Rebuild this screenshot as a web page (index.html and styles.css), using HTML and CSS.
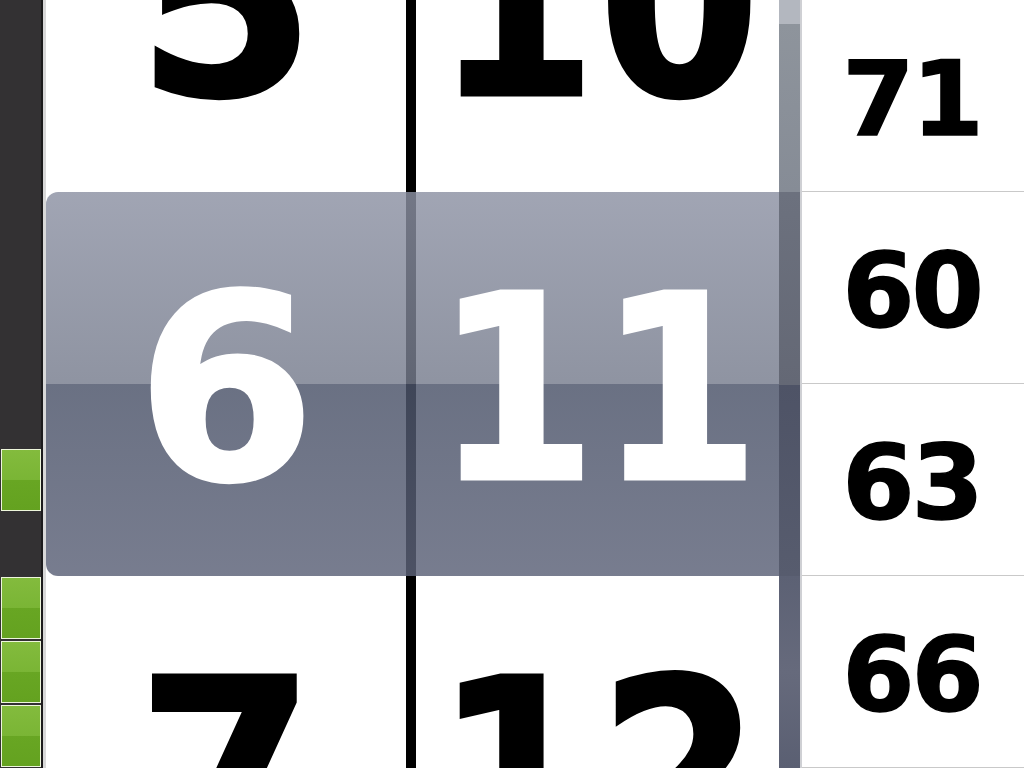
FILE: index.html
```html
<!DOCTYPE html>
<html>
<head>
<meta charset="utf-8">
<link rel="stylesheet" href="styles.css">
</head>
<body>
<div class="app">
  <div class="meter">
    <div class="seg"></div><div class="seg"></div><div class="seg"></div><div class="seg"></div>
    <div class="seg"></div><div class="seg"></div><div class="seg"></div><div class="seg on"></div>
    <div class="seg"></div><div class="seg on"></div><div class="seg on"></div><div class="seg on"></div>
  </div>
  <div class="wheels">
    <div class="col col-a">
      <div class="reel">
        <div class="cell">5</div>
        <div class="cell sel"><span class="num">6</span></div>
        <div class="cell">7</div>
      </div>
    </div>
    <div class="divider"></div>
    <div class="col col-b">
      <div class="reel">
        <div class="cell">10</div>
        <div class="cell sel"><span class="num">11</span></div>
        <div class="cell">12</div>
      </div>
    </div>
    <div class="overlay"></div>
  </div>
  <div class="scrollbar">
    <div class="thumb"></div>
    <div class="track t1"></div>
    <div class="track t2"></div>
    <div class="track t3"></div>
    <div class="track t4"></div>
  </div>
  <div class="list">
    <div class="item">71</div>
    <div class="item">60</div>
    <div class="item">63</div>
    <div class="item">66</div>
  </div>
</div>
</body>
</html>
```
FILE: styles.css
```css
html, body {
  margin: 0;
  padding: 0;
  background: #ffffff;
}
.app {
  display: flex;
  width: 1024px;
  height: 768px;
  overflow: hidden;
  font-family: "DejaVu Sans", "Liberation Sans", sans-serif;
  font-weight: bold;
}
.meter {
  width: 41px;
  flex: none;
  background: #333133;
  border-right: 2px solid #1c1b1c;
  box-shadow: 3px 0 0 #d8d8d8;
  margin-right: 3px;
  display: grid;
  grid-template-rows: repeat(12, 64px);
}
.seg.on {
  margin: 1px 0 1px 1px;
  border: 1px solid #eef6dc;
  background: linear-gradient(to bottom, #83bb3d 0%, #7ab535 50%, #68a623 50%, #64a220 100%);
}
.wheels {
  position: relative;
  display: flex;
  width: 733px;
  flex: none;
  overflow: hidden;
}
.col {
  background: #ffffff;
  overflow: hidden;
}
.col-a { width: 360px; }
.col-b { width: 363px; }
.divider {
  width: 10px;
  background: #000000;
}
.reel {
  margin-top: -192px;
}
.cell {
  height: 384px;
  display: flex;
  align-items: center;
  justify-content: center;
  font-size: 258px;
  line-height: 1;
  color: #000000;
  padding-top: 12px;
  box-sizing: border-box;
  -webkit-text-stroke: 3px currentColor;
}
.col-b .cell {
  font-family: "DejaVu Sans Condensed", "DejaVu Sans", sans-serif;
  font-stretch: condensed;
  letter-spacing: 2px;
  text-indent: 2px;
}
.cell.sel .num {
  position: relative;
  z-index: 2;
  color: #ffffff;
}
.overlay {
  position: absolute;
  z-index: 1;
  left: 0;
  right: 0;
  top: 192px;
  height: 384px;
  border-radius: 12px 0 0 12px;
  background: linear-gradient(to bottom,
    rgba(140, 145, 163, 0.82) 0%,
    rgba(118, 124, 141, 0.82) 50%,
    rgba(76, 84, 106, 0.83) 50%,
    rgba(92, 98, 120, 0.83) 100%);
}
.scrollbar {
  width: 21px;
  flex: none;
  display: flex;
  flex-direction: column;
  border-right: 2px solid #cfd0d4;
}
.thumb { height: 24px; background: #b3b7bf; }
.track.t1 { height: 168px; background: linear-gradient(#8e949c, #868c96); }
.track.t2 { height: 193px; background: linear-gradient(#6c717e, #646875); }
.track.t3 { height: 191px; background: linear-gradient(#4e5366, #575c6e); }
.track.t4 { flex: 1; background: linear-gradient(#5c6174, #666a7c 50%, #5a5f72); }
.list {
  flex: 1;
  display: flex;
  flex-direction: column;
}
.item {
  height: 192px;
  box-sizing: border-box;
  border-bottom: 1px solid #c9c9c9;
  display: flex;
  align-items: center;
  justify-content: center;
  font-size: 104px;
  line-height: 1;
  color: #000000;
  padding-top: 6px;
  letter-spacing: -3px;
  text-indent: -3px;
  -webkit-text-stroke: 1.5px currentColor;
}
```
